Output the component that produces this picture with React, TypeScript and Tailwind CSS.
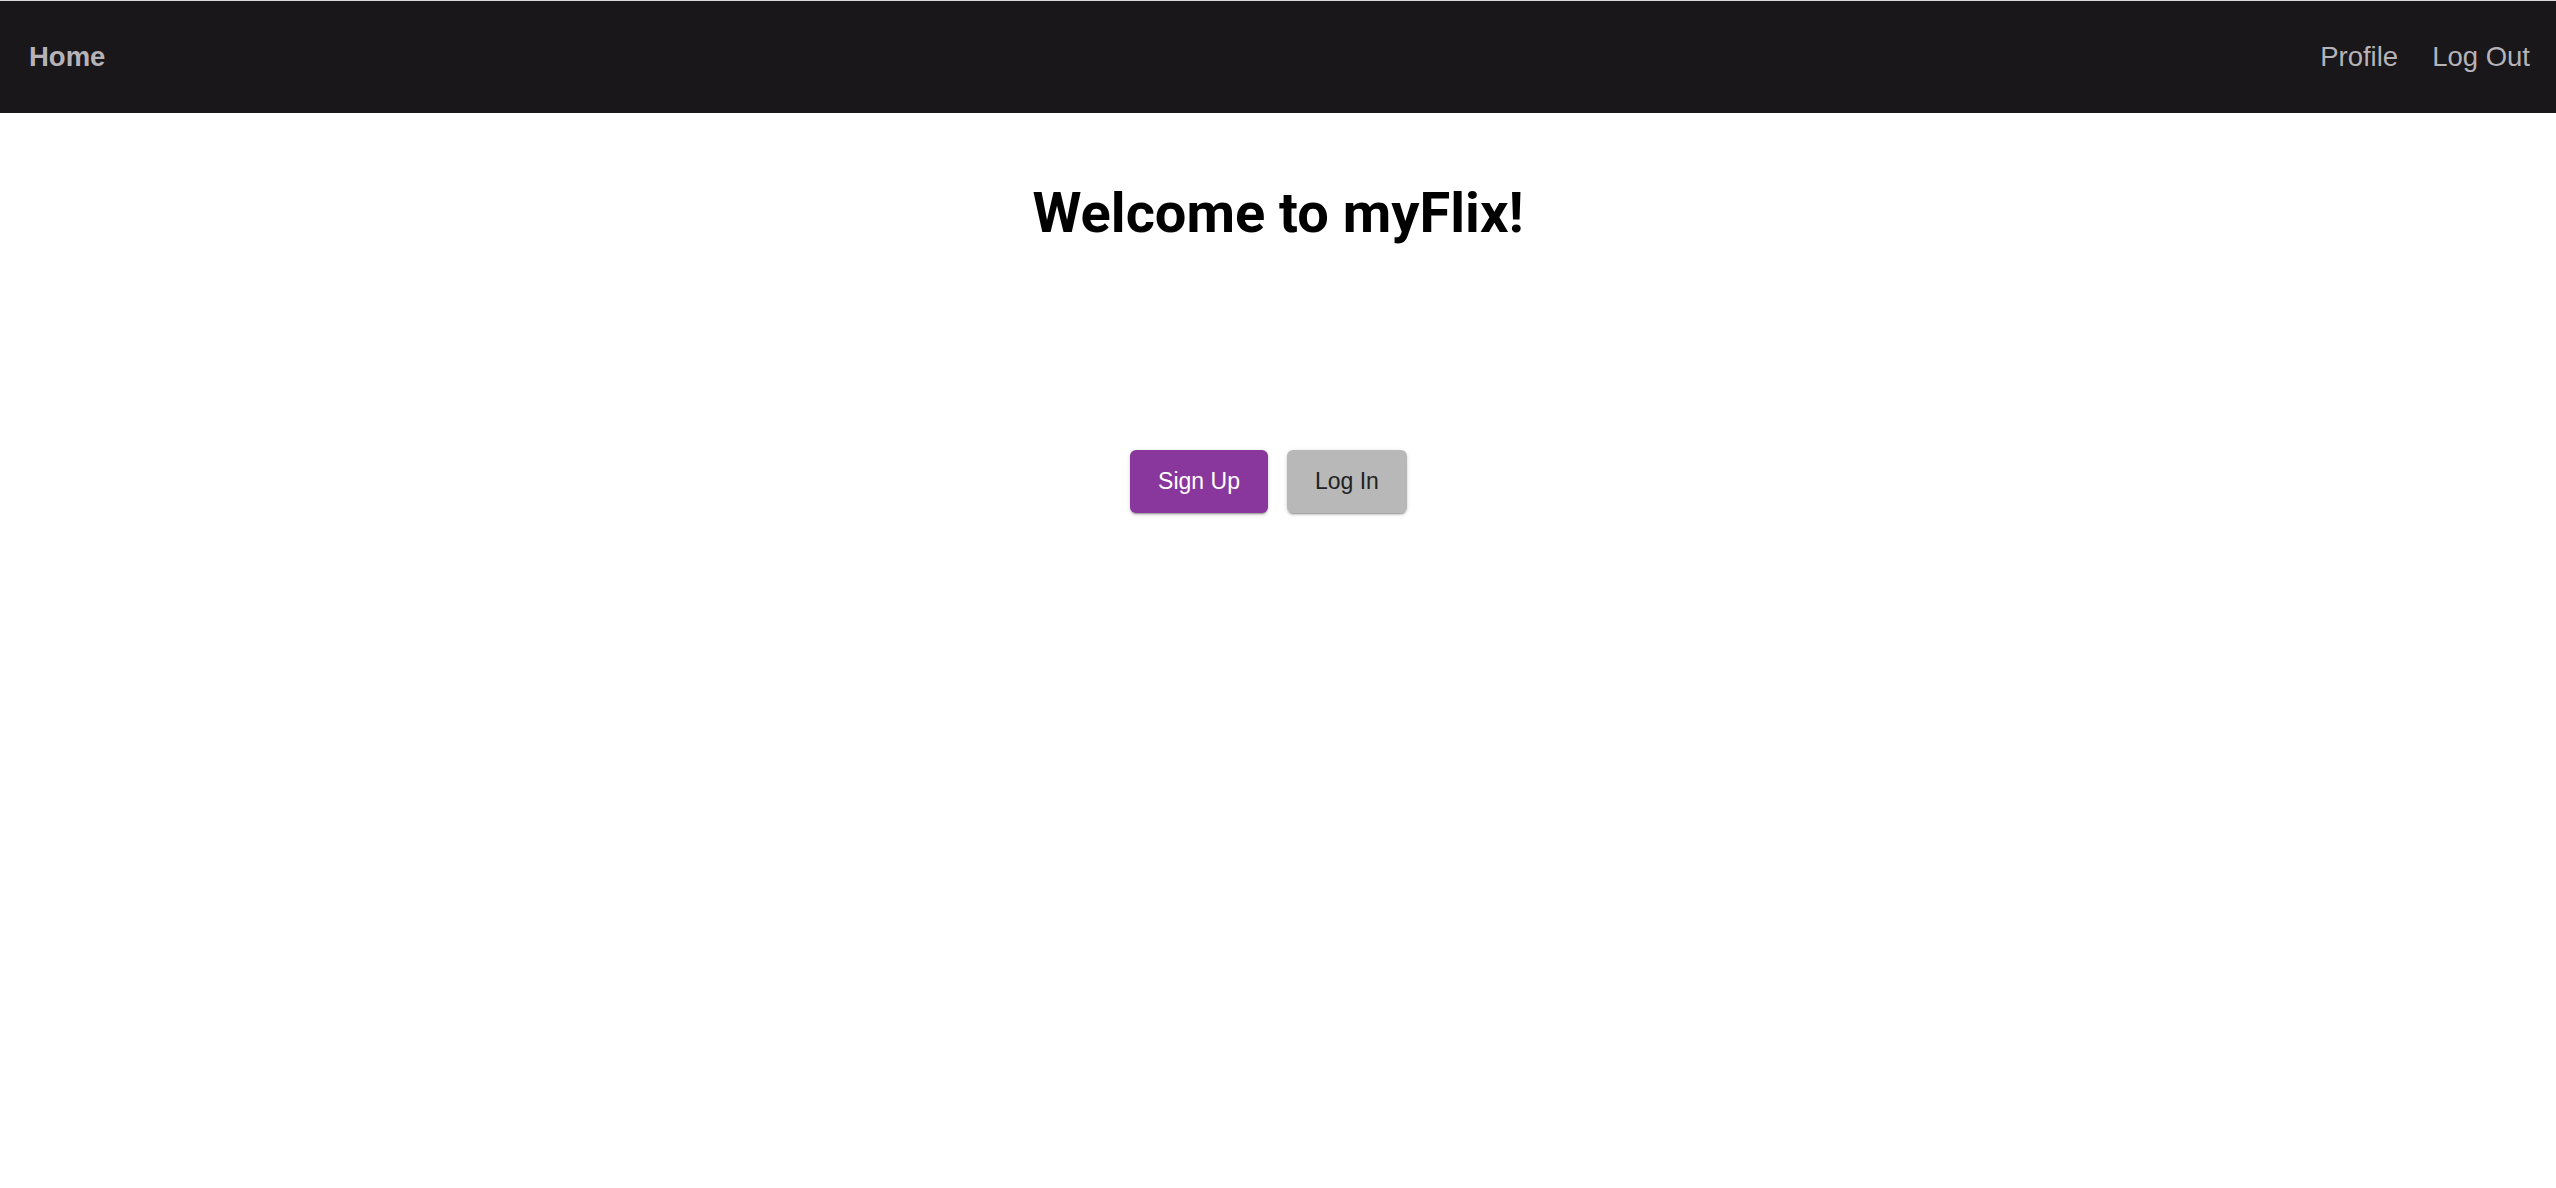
import React from 'react';

const NavBar: React.FC = () => (
  <nav className="flex h-[113px] items-center justify-between border-t border-[#d9d9d9] bg-[#1a171a] pl-[29px] pr-[26px] font-['Liberation_Sans',Arial,sans-serif] text-[27.5px] text-[#b5b3b7]">
    <a href="#" className="font-bold">
      Home
    </a>
    <div className="flex items-center gap-[34px]">
      <a href="#">Profile</a>
      <a href="#">Log Out</a>
    </div>
  </nav>
);

export default function App() {
  return (
    <div className="min-h-screen bg-white">
      <NavBar />
      <main className="flex flex-col items-center">
        <h1 className="mt-[72px] font-['Roboto',sans-serif] text-[56px] font-bold leading-none text-black">
          Welcome to myFlix!
        </h1>
        <div className="mt-[209px] flex justify-center font-['Liberation_Sans',Arial,sans-serif] text-[23px]">
          <button className="mr-[19px] h-[63px] rounded-[6px] bg-[#89379c] px-[28px] text-white shadow-[0_3px_1px_-2px_rgba(0,0,0,0.2),0_2px_2px_0_rgba(0,0,0,0.14),0_1px_5px_0_rgba(0,0,0,0.12)]">
            Sign Up
          </button>
          <button className="mr-[19px] h-[63px] rounded-[6px] bg-[#b8b8b8] px-[28px] text-[#222] shadow-[0_3px_1px_-2px_rgba(0,0,0,0.2),0_2px_2px_0_rgba(0,0,0,0.14),0_1px_5px_0_rgba(0,0,0,0.12)]">
            Log In
          </button>
        </div>
      </main>
    </div>
  );
}
